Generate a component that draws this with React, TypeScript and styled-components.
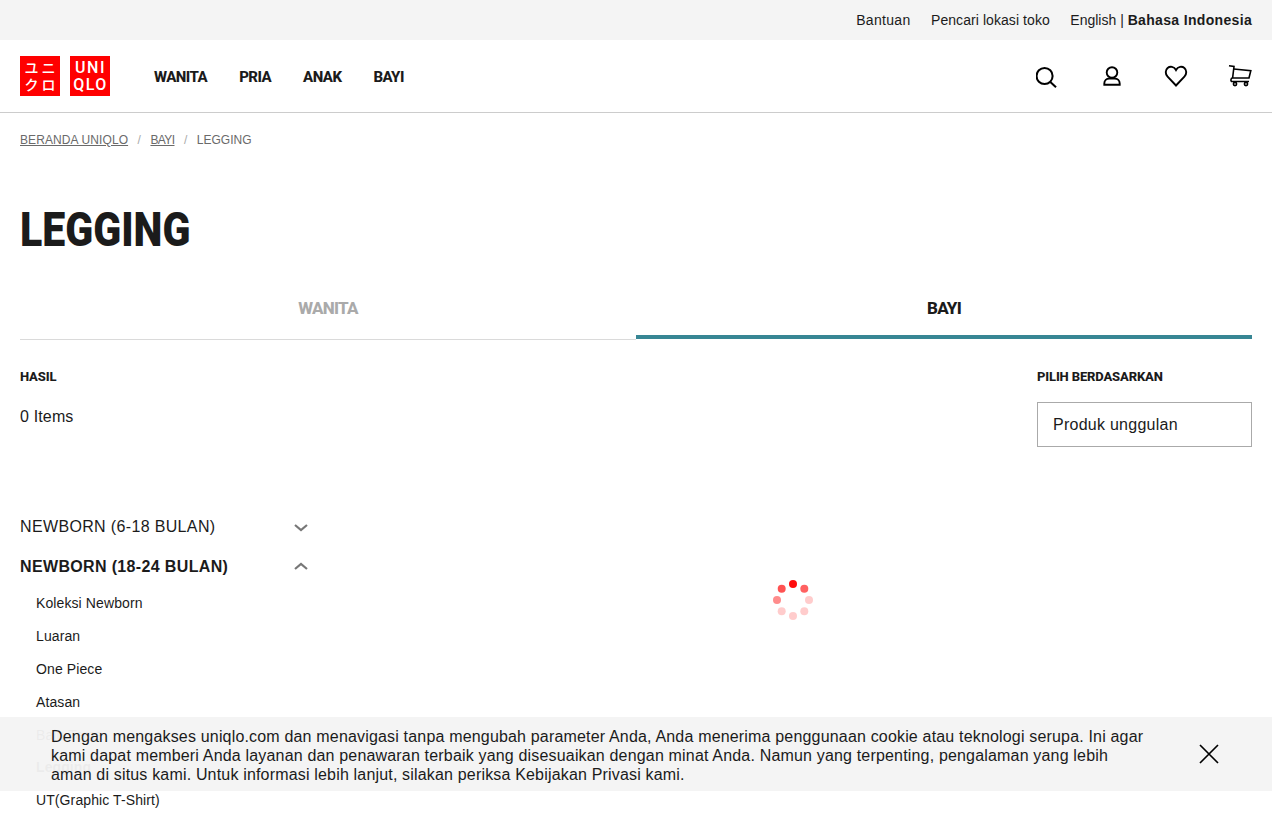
import styled, { createGlobalStyle } from 'styled-components';

const GlobalStyle = createGlobalStyle`
  html, body {
    margin: 0;
    height: 824px;
    overflow: hidden;
    background: #fff;
  }
  body {
    font-family: "Liberation Sans", Arial, sans-serif;
    color: #1b1b1b;
  }
`;

const HEAD_FONT = `"Roboto", "Liberation Sans", sans-serif`;

const SPINNER = [
  { x: 24, y: 8, o: 0.95 },
  { x: 35.3, y: 12.7, o: 0.62 },
  { x: 40, y: 24, o: 0.2 },
  { x: 35.3, y: 35.3, o: 0.2 },
  { x: 24, y: 40, o: 0.2 },
  { x: 12.7, y: 35.3, o: 0.2 },
  { x: 8, y: 24, o: 0.45 },
  { x: 12.7, y: 12.7, o: 0.68 },
];

const SUB_ITEMS = [
  { label: 'Koleksi Newborn' },
  { label: 'Luaran' },
  { label: 'One Piece' },
  { label: 'Atasan' },
  { label: 'Baju Tema' },
  { label: 'Legging', active: true },
  { label: 'UT(Graphic T-Shirt)' },
];

function Chevron({ up }: { up?: boolean }) {
  return (
    <ChevronIcon $up={up} width="14" height="8" viewBox="0 0 14 8" fill="none">
      <path
        d={up ? 'M1 7l6-5 6 5' : 'M1 1l6 5 6-5'}
        stroke="#777"
        strokeWidth="2.2"
      />
    </ChevronIcon>
  );
}

export default function App() {
  return (
    <Page>
      <GlobalStyle />
      <TopBar>
        <TopLink $spacing="0.3px">Bantuan</TopLink>
        <TopLink $spacing="0.07px">Pencari lokasi toko</TopLink>
        <TopLink $last>
          English | <strong>Bahasa Indonesia</strong>
        </TopLink>
      </TopBar>

      <Header>
        <Logos>
          <LogoSquare $jp>
            <span>ユニ</span>
            <span>クロ</span>
          </LogoSquare>
          <LogoSquare>
            <span>UNI</span>
            <span>QLO</span>
          </LogoSquare>
        </Logos>
        <Nav>
          <NavItem>WANITA</NavItem>
          <NavItem>PRIA</NavItem>
          <NavItem>ANAK</NavItem>
          <NavItem>BAYI</NavItem>
        </Nav>
        <Icons>
          <IconSlot>
            <svg width="26" height="26" viewBox="-2 0 26 26" fill="none" stroke="#000" strokeWidth="2.2">
              <circle cx="7.300" cy="13" r="8.700" />
              <path d="M13.500 19.500l6.200 5.800" />
            </svg>
          </IconSlot>
          <IconSlot>
            <svg width="20" height="22" viewBox="0 0 20 22" fill="none" stroke="#000" strokeWidth="1.9">
              <circle cx="10" cy="7.500" r="5.300" />
              <path d="M2.300 19.800v-1.300c0-2.800 2.200-5 5-5h5.400c2.800 0 5 2.200 5 5v1.300z" />
            </svg>
          </IconSlot>
          <IconSlot>
            <svg width="24" height="22" viewBox="0 0 24 22" fill="none" stroke="#000" strokeWidth="1.9">
              <path d="M12 20.500L3.600 11.700C1 9 1.300 5 3.600 3C6 1 10 1.300 12 5C14 1.300 18 1 20.400 3C22.700 5 23 9 20.400 11.700Z" />
            </svg>
          </IconSlot>
          <IconSlot>
            <svg width="24" height="22" viewBox="0 0 24 22" fill="none" stroke="#000" strokeWidth="1.6">
              <path d="M1 .8L6 1.500L4.600 13" />
              <path d="M5.700 4L22.800 5.800L21 13H4.600C2.600 13 2.300 16.500 4.200 16.500H21" />
              <circle cx="7" cy="19" r="1.600" />
              <circle cx="18" cy="19" r="1.600" />
            </svg>
          </IconSlot>
        </Icons>
      </Header>

      <Content>
        <Breadcrumb>
          <CrumbLink>BERANDA UNIQLO</CrumbLink>
          <CrumbSep>/</CrumbSep>
          <CrumbLink $tight>BAYI</CrumbLink>
          <CrumbSep>/</CrumbSep>
          <span>LEGGING</span>
        </Breadcrumb>

        <Title>LEGGING</Title>

        <Tabs>
          <Tab>WANITA</Tab>
          <Tab $active>BAYI</Tab>
        </Tabs>

        <ResultRow>
          <div>
            <SmallHead>HASIL</SmallHead>
            <ItemCount>0 Items</ItemCount>
          </div>
          <SortBlock>
            <SmallHead>PILIH BERDASARKAN</SmallHead>
            <SortBox>Produk unggulan</SortBox>
          </SortBlock>
        </ResultRow>

        <Body>
          <Sidebar>
            <AccordionHead>
              NEWBORN (6-18 BULAN)
              <Chevron />
            </AccordionHead>
            <AccordionHead $open>
              NEWBORN (18-24 BULAN)
              <Chevron up />
            </AccordionHead>
            <SubList>
              {SUB_ITEMS.map((item) => (
                <SubItem key={item.label} $active={item.active}>
                  {item.label}
                </SubItem>
              ))}
            </SubList>
          </Sidebar>
          <Results>
            <svg width="48" height="48" viewBox="0 0 48 48">
              {SPINNER.map((d) => (
                <circle key={`${d.x}-${d.y}`} cx={d.x} cy={d.y} r="4" fill="#f00" fillOpacity={d.o} />
              ))}
            </svg>
          </Results>
        </Body>
      </Content>

      <CookieBar>
        <CookieText>
          Dengan mengakses uniqlo.com dan menavigasi tanpa mengubah parameter Anda, Anda menerima penggunaan cookie atau
          teknologi serupa. Ini agar kami dapat memberi Anda layanan dan penawaran terbaik yang disesuaikan dengan minat
          Anda. Namun yang terpenting, pengalaman yang lebih aman di situs kami. Untuk informasi lebih lanjut, silakan
          periksa Kebijakan Privasi kami.
        </CookieText>
        <svg width="20" height="20" viewBox="0 0 20 20" stroke="#000" strokeWidth="1.7">
          <path d="M1 1l18 18M19 1L1 19" />
        </svg>
      </CookieBar>
    </Page>
  );
}

const Page = styled.div`
  position: relative;
  width: 1272px;
  height: 824px;
  overflow: hidden;
`;

const TopBar = styled.div`
  height: 40px;
  background: #f4f4f4;
  display: flex;
  align-items: center;
  justify-content: flex-end;
  gap: 20.5px;
  padding: 0 20px;
  font-size: 14px;
`;

const TopLink = styled.span<{ $spacing?: string; $last?: boolean }>`
  letter-spacing: ${(p) => p.$spacing || '0'};

  strong {
    letter-spacing: 0.33px;
  }
`;

const Header = styled.header`
  height: 72px;
  border-bottom: 1px solid #ccc;
  display: flex;
  align-items: center;
  padding: 0 20px;
`;

const Logos = styled.div`
  display: flex;
  gap: 10px;
`;

const LogoSquare = styled.div<{ $jp?: boolean }>`
  width: 40px;
  height: 40px;
  background: #f00;
  color: #fff;
  display: flex;
  flex-direction: column;
  align-items: center;
  justify-content: center;
  white-space: nowrap;
  font-family: ${(p) => (p.$jp ? `"Noto Sans CJK JP", sans-serif` : HEAD_FONT)};
  font-weight: 500;
  font-size: ${(p) => (p.$jp ? '14px' : '16px')};
  line-height: 17px;
  letter-spacing: ${(p) => (p.$jp ? '3px' : '1.5px')};
  padding-left: ${(p) => (p.$jp ? '3px' : '1px')};
  box-sizing: border-box;
`;

const Nav = styled.nav`
  display: flex;
  gap: 32px;
  margin-left: 44px;
`;

const NavItem = styled.span`
  font-family: ${HEAD_FONT};
  font-weight: 800;
  font-size: 15px;
  letter-spacing: -0.55px;
  color: #1b1b1b;
  padding-top: 2px;
`;

const Icons = styled.div`
  margin-left: auto;
  display: flex;
  align-items: center;
  gap: 40px;
`;

const IconSlot = styled.span`
  width: 24px;
  height: 26px;
  display: flex;
  align-items: center;
  justify-content: center;
`;

const Content = styled.main`
  padding: 0 20px;
`;

const Breadcrumb = styled.div`
  height: 54px;
  display: flex;
  align-items: center;
  font-size: 12px;
  color: #6a6a6a;
`;

const CrumbLink = styled.span<{ $tight?: boolean }>`
  text-decoration: underline;
  letter-spacing: ${(p) => (p.$tight ? '-0.6px' : '0.1px')};
`;

const CrumbSep = styled.span`
  margin: 0 9.5px;
  color: #aaa;
`;

const Title = styled.h1`
  margin: 36px 0 0;
  width: fit-content;
  height: 54px;
  line-height: 54px;
  font-family: ${HEAD_FONT};
  font-weight: 900;
  font-size: 48px;
  transform: scaleX(0.855);
  transform-origin: left center;
  color: #1b1b1b;
`;

const Tabs = styled.div`
  display: grid;
  grid-template-columns: 1fr 1fr;
  align-items: start;
  margin-top: 33px;
`;

const Tab = styled.div<{ $active?: boolean }>`
  height: ${(p) => (p.$active ? '49px' : '50px')};
  box-sizing: border-box;
  display: flex;
  align-items: center;
  justify-content: center;
  padding-bottom: ${(p) => (p.$active ? '9px' : '13px')};
  font-family: ${HEAD_FONT};
  font-weight: 800;
  font-size: 17px;
  letter-spacing: -0.7px;
  color: ${(p) => (p.$active ? '#1b1b1b' : '#aaa')};
  border-bottom: ${(p) => (p.$active ? '4px solid #378694' : '1px solid #dadada')};
`;

const ResultRow = styled.div`
  display: flex;
  justify-content: space-between;
  margin-top: 28px;
`;

const SmallHead = styled.div`
  font-family: ${HEAD_FONT};
  font-weight: 800;
  font-size: 13px;
  line-height: 18px;
  letter-spacing: -0.15px;
  color: #1b1b1b;
`;

const ItemCount = styled.div`
  margin-top: 19px;
  font-size: 16px;
  line-height: 24px;
  letter-spacing: 0.15px;
`;

const SortBlock = styled.div`
  width: 215px;
`;

const SortBox = styled.div`
  margin-top: 16px;
  height: 45px;
  box-sizing: border-box;
  border: 1px solid #aaa;
  padding: 0 15px;
  display: flex;
  align-items: center;
  font-size: 16px;
  letter-spacing: 0.26px;
`;

const Body = styled.div`
  display: flex;
  gap: 25px;
  margin-top: 60px;
`;

const Sidebar = styled.aside`
  width: 288px;
  flex: none;
`;

const AccordionHead = styled.div<{ $open?: boolean }>`
  height: 40px;
  display: flex;
  align-items: center;
  justify-content: space-between;
  font-size: 16px;
  font-weight: ${(p) => (p.$open ? 700 : 400)};
  letter-spacing: 0.35px;
`;

const ChevronIcon = styled.svg<{ $up?: boolean }>`
  display: block;
  margin-top: ${(p) => (p.$up ? '-2px' : '1px')};
`;

const SubList = styled.ul`
  list-style: none;
  margin: 0;
  padding: 0 0 0 16px;
`;

const SubItem = styled.li<{ $active?: boolean }>`
  height: 32.8px;
  display: flex;
  align-items: center;
  font-size: 14px;
  letter-spacing: 0.1px;
  font-weight: ${(p) => (p.$active ? 700 : 400)};
`;

const Results = styled.section`
  flex: 1;
  display: flex;
  justify-content: center;
  padding-top: 69px;
`;

const CookieBar = styled.div`
  position: absolute;
  left: 0;
  right: 0;
  top: 717px;
  height: 74px;
  box-sizing: border-box;
  background: rgba(244, 244, 244, 0.96);
  display: flex;
  align-items: center;
  justify-content: space-between;
  padding: 0 53px 0 51px;
`;

const CookieText = styled.p`
  margin: 2px 0 0;
  width: 1098px;
  font-size: 16px;
  line-height: 19px;
  letter-spacing: 0.175px;
`;
